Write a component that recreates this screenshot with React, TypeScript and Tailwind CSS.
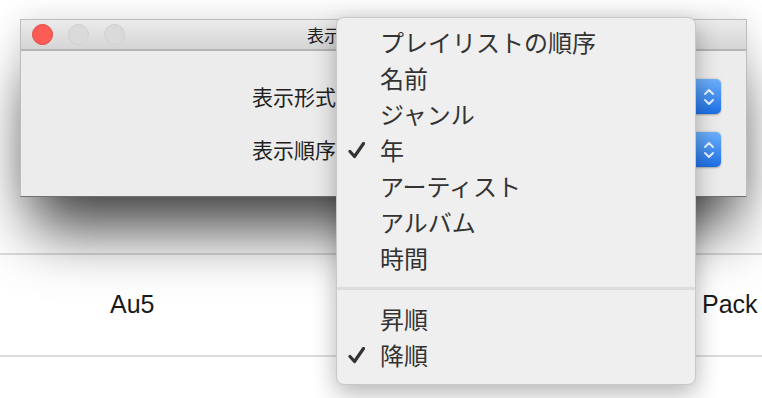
import React from "react";

const jp = "[font-family:'Noto_Sans_CJK_JP','Noto_Sans',sans-serif]";

const menuItems = [
  { label: "プレイリストの順序", checked: false },
  { label: "名前", checked: false },
  { label: "ジャンル", checked: false },
  { label: "年", checked: true },
  { label: "アーティスト", checked: false },
  { label: "アルバム", checked: false },
  { label: "時間", checked: false },
];

const orderItems = [
  { label: "昇順", checked: false },
  { label: "降順", checked: true },
];

function Check() {
  return (
    <svg width="17" height="17" viewBox="0 0 17 17" fill="none">
      <path
        d="M2 9.5 L6.5 14.5 L15.5 1.5"
        stroke="#333"
        strokeWidth="3.2"
        strokeLinecap="round"
        strokeLinejoin="round"
      />
    </svg>
  );
}

function MenuRow({ label, checked }: { label: string; checked: boolean }) {
  return (
    <div className="flex h-[36px] items-center">
      <div className="flex w-[43px] items-center pl-[11px]">{checked && <Check />}</div>
      <span className={`${jp} text-[24px] leading-none text-[#333]`}>{label}</span>
    </div>
  );
}

function PopupButton() {
  return (
    <div className="flex h-[35px] w-[377px] rounded-[5px] shadow-[0_0.5px_2px_rgba(0,0,0,0.3)]">
      <div className="flex-1 rounded-l-[5px] bg-white" />
      <div className="flex w-[25px] items-center justify-center rounded-r-[5px] bg-gradient-to-b from-[#6cb0fb] to-[#1b6fe6]">
        <svg width="14" height="24" viewBox="0 0 14 24" fill="none">
          <path d="M3 9 L7 5 L11 9" stroke="#e8f1ff" strokeWidth="2" strokeLinecap="round" strokeLinejoin="round" />
          <path d="M3 15 L7 19 L11 15" stroke="#e8f1ff" strokeWidth="2" strokeLinecap="round" strokeLinejoin="round" />
        </svg>
      </div>
    </div>
  );
}

export default function App() {
  return (
    <div className="relative h-[398px] w-[762px] overflow-hidden bg-white">
      {/* Window */}
      <div className="pl-[20px] pt-[19px]">
        <div className="relative z-10 w-[727px] border border-[#bdbdbd] border-b-[#707070] bg-[#ececec] shadow-[0_45px_60px_-12px_rgba(0,0,0,0.72),0_0_30px_rgba(0,0,0,0.12)]">
          <div className="flex h-[31px] items-center border-b-2 border-[#b4b4b4] bg-gradient-to-b from-[#ebebeb] to-[#d5d5d5]">
            <div className="flex w-[120px] items-center gap-[15px] pl-[11px]">
              <div className="h-[21px] w-[21px] rounded-full border border-[#e2463f] bg-[#fd5b55]" />
              <div className="h-[21px] w-[21px] rounded-full border border-[#cfcfcf] bg-[#dadada]" />
              <div className="h-[21px] w-[21px] rounded-full border border-[#cfcfcf] bg-[#dadada]" />
            </div>
            <div className={`${jp} flex-1 text-center text-[17px] text-[#222]`}>表示オプション設定</div>
            <div className="w-[120px]" />
          </div>
          <div className="flex h-[145px] flex-col gap-[18px] pl-[231px] pt-[28px]">
            <div className="flex items-center gap-[8px]">
              <span className={`${jp} w-[84px] text-[21px] leading-none text-[#222]`}>表示形式</span>
              <PopupButton />
            </div>
            <div className="flex items-center gap-[8px]">
              <span className={`${jp} w-[84px] text-[21px] leading-none text-[#222]`}>表示順序</span>
              <PopupButton />
            </div>
          </div>
        </div>
      </div>

      {/* List row */}
      <div className="mt-[56px] flex h-[104px] items-center border-y-2 border-[#dcdcdc] [font-family:'Liberation_Sans',Arial,sans-serif] text-[25px] text-[#1a1a1a]">
        <div className="w-[702px] pl-[110px]">Au5</div>
        <div className="whitespace-nowrap">Pack</div>
      </div>

      {/* Dropdown menu */}
      <div className="absolute left-[336px] top-[17px] z-20 w-[360px] rounded-[8px] border border-[#c8c8c8] bg-[#efefef] pb-[11px] pt-[6px] shadow-[0_8px_24px_rgba(0,0,0,0.3)]">
        {menuItems.map((item) => (
          <MenuRow key={item.label} {...item} />
        ))}
        <div className="my-[11px] h-[3px] bg-[#dcdcdc]" />
        {orderItems.map((item) => (
          <MenuRow key={item.label} {...item} />
        ))}
      </div>
    </div>
  );
}
